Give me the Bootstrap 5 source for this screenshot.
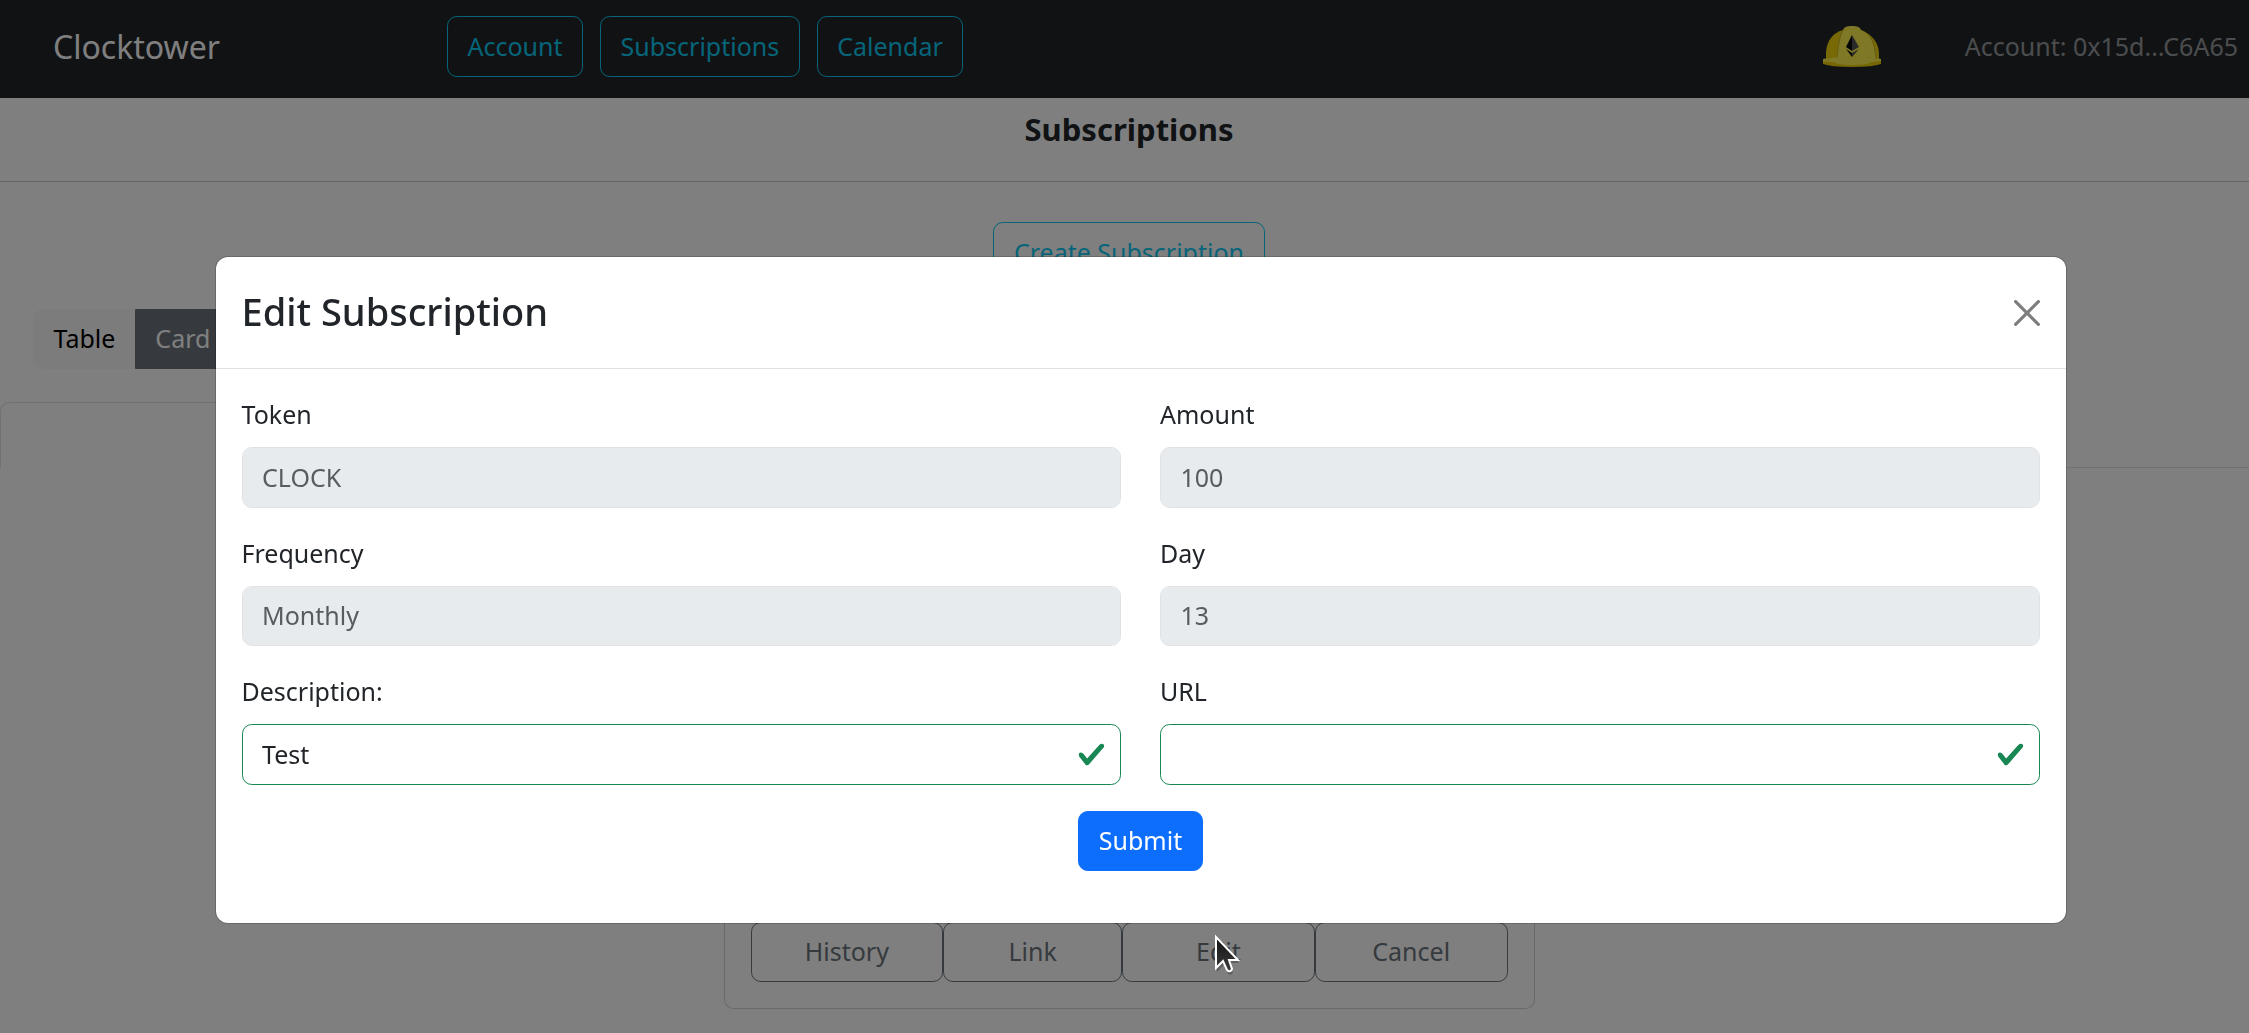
<!DOCTYPE html>
<html lang="en">
<head>
<meta charset="utf-8">
<meta name="viewport" content="width=device-width, initial-scale=1">
<title>Clocktower</title>
<link href="https://cdn.jsdelivr.net/npm/bootstrap@5.3.0/dist/css/bootstrap.min.css" rel="stylesheet">
<style>
:root { font-size: 26px; --text: 25px; }
body { font-family: "Noto Sans", "Open Sans", sans-serif; font-size: var(--text); line-height: 39px; min-height: 100vh; }
.btn, .form-control { font-size: var(--text); line-height: 39px; }
.topbar { height: 98px; padding: 0 11px 5px 53px; }
.topbar .navbar-brand { width: 394px; margin: 0; padding: 0; font-size: 32px; line-height: 48px; }
.topbar .navbar-text { padding: 0; margin-left: 84px; }
.topbar-links { gap: 17px; }
.page-title { padding-top: 7px; font-size: 31px; line-height: 48px; }
.shifted { padding-left: 9px; }
.rule { margin: 28px 0 40px; }
.view-switch { margin: 26px 0 33px 33px; }
.view-switch .btn-group { display: flex; width: max-content; }
.tab-strip .nav-link { height: 66px; width: 1129px; }
.sub-card { width: 811px; min-height: 515px; margin-top: 26px; }
.sub-card .btn { flex: 11 1 0; }
.sub-card .btn-narrow { flex-grow: 10; }
.modal { padding-left: 32px !important; }
.modal-dialog { max-width: 1852px; margin-top: 256px; }
.modal-title { font-size: 38px; line-height: 57px; padding-bottom: 2px; }
.modal .btn-close { font-size: 26px; }
.modal label { margin-bottom: 13px; }
.modal-content { padding-bottom: 26px; }
.form-control:disabled { color: #595c5f; background-color: #e7ebee; }
.form-control.is-valid { border-color: #198754; }
.pointer { position: fixed; left: 1212px; top: 930px; z-index: 2000; pointer-events: none; }
</style>
<script src="https://cdn.jsdelivr.net/npm/bootstrap@5.3.0/dist/js/bootstrap.bundle.min.js"></script>
</head>
<body class="overflow-hidden">

<nav class="navbar-dark bg-dark topbar d-flex align-items-center">
  <a class="navbar-brand" href="#">Clocktower</a>
  <div class="topbar-links d-flex me-auto">
    <button type="button" class="btn btn-outline-info">Account</button>
    <button type="button" class="btn btn-outline-info">Subscriptions</button>
    <button type="button" class="btn btn-outline-info">Calendar</button>
  </div>
  <svg width="58" height="42" viewBox="0 0 58 42" aria-label="Hardhat">
    <path d="M3 34V26C4 14 10 7 20 4L38 4C49 8 56 17 56 28V34Z" fill="#efd30d"/>
    <path d="M14 33C15 19 17 10 20 4L38 4C46 7 52 17 53 33Z" fill="#fff14e"/>
    <path d="M20 5C20 1 24 0 29 0S38 1 38 5Z" fill="#fff04d"/>
    <path d="M14 33C15 18 17 10 20 4M53 33C52 21 50 15 47 10" fill="none" stroke="#cfb62a" stroke-width="1"/>
    <path d="M0 33Q29 28 58 33V38Q50 41 29 41T0 38Z" fill="#eccd08"/>
    <path d="M0 33Q29 28 58 33V35Q48 36 44 38Q29 40 15 38Q10 35 0 36Z" fill="#fff04d"/>
    <path d="M29 9 23 21 29 25Z" fill="#0b0b0b"/><path d="M29 9 36 21 29 25Z" fill="#555"/>
    <path d="M23 23 29 27V31Z" fill="#111"/><path d="M36 23 29 27V31Z" fill="#555"/>
  </svg>
  <span class="navbar-text">Account: 0x15d...C6A65</span>
</nav>

<main>
  <h1 class="page-title shifted text-center fw-bold m-0">Subscriptions</h1>
  <hr class="rule">
  <div class="shifted d-flex justify-content-center">
    <button type="button" class="btn btn-outline-info">Create Subscription</button>
  </div>
  <div class="view-switch">
    <div class="btn-group" role="group" aria-label="View">
      <button type="button" class="btn btn-light">Table</button>
      <button type="button" class="btn btn-secondary">Card</button>
    </div>
  </div>
  <ul class="nav nav-tabs tab-strip">
    <li class="nav-item"><a class="nav-link active" href="#" aria-label="Subscriptions"></a></li>
  </ul>
  <div class="shifted">
    <div class="card sub-card mx-auto">
      <div class="card-body d-flex align-items-end p-3">
        <div class="d-flex w-100">
          <button type="button" class="btn btn-outline-secondary">History</button>
          <button type="button" class="btn btn-outline-secondary btn-narrow">Link</button>
          <button type="button" class="btn btn-outline-secondary">Edit</button>
          <button type="button" class="btn btn-outline-secondary">Cancel</button>
        </div>
      </div>
    </div>
  </div>
</main>

<div class="modal-backdrop show"></div>
<div class="modal show d-block" tabindex="-1" role="dialog" aria-labelledby="editTitle">
  <div class="modal-dialog">
    <div class="modal-content">
      <div class="modal-header">
        <h2 class="modal-title" id="editTitle">Edit Subscription</h2>
        <button type="button" class="btn-close" aria-label="Close"></button>
      </div>
      <form class="modal-body">
        <div class="row mb-3">
          <div class="col"><label class="d-block" for="token">Token</label><input class="form-control" id="token" value="CLOCK" disabled></div>
          <div class="col"><label class="d-block" for="amount">Amount</label><input class="form-control" id="amount" value="100" disabled></div>
        </div>
        <div class="row mb-3">
          <div class="col"><label class="d-block" for="freq">Frequency</label><input class="form-control" id="freq" value="Monthly" disabled></div>
          <div class="col"><label class="d-block" for="day">Day</label><input class="form-control" id="day" value="13" disabled></div>
        </div>
        <div class="row mb-3">
          <div class="col"><label class="d-block" for="desc">Description:</label><input class="form-control is-valid" id="desc" value="Test"></div>
          <div class="col"><label class="d-block" for="url">URL</label><input class="form-control is-valid" id="url"></div>
        </div>
        <div class="text-center"><button type="button" class="btn btn-primary">Submit</button></div>
      </form>
    </div>
  </div>
</div>

<svg class="pointer" width="34" height="50" viewBox="0 0 34 50" aria-hidden="true">
  <defs><linearGradient id="arrow" x1="0" y1="0" x2="0" y2="1"><stop offset="0" stop-color="#111"/><stop offset="1" stop-color="#3c3c3c"/></linearGradient></defs>
  <path d="M4 8V40L11 33L15 42Q18 44 20 41L16 31H26Z" fill="#000" opacity=".25" transform="translate(1 2)"/>
  <path d="M4 7V38L11 31L15 40Q18 43 20 39L17 30H26Z" fill="url(#arrow)" stroke="#fff" stroke-width="2"/>
</svg>
</body>
</html>
